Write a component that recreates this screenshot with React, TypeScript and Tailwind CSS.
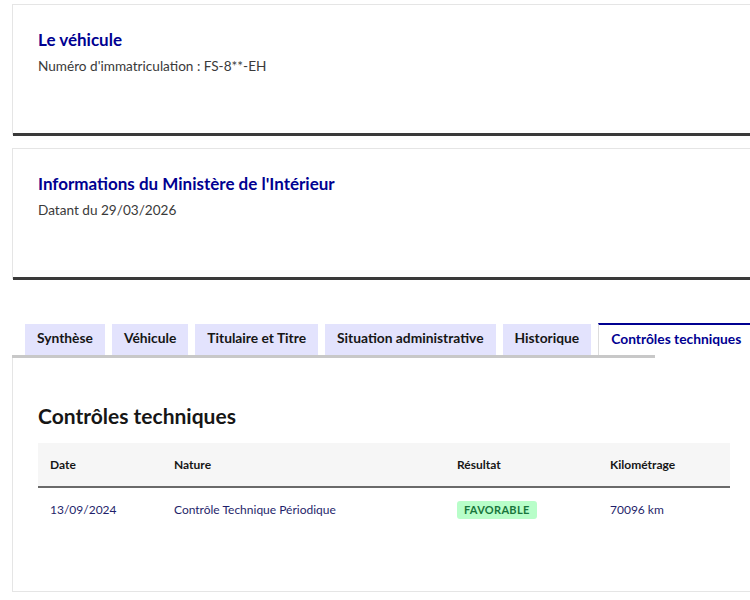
import React from 'react';

const tabs = ['Synthèse', 'Véhicule', 'Titulaire et Titre', 'Situation administrative', 'Historique'];

const InfoCard: React.FC<{ title: string; subtitle: string; className?: string }> = ({ title, subtitle, className = '' }) => (
  <div className={`w-[760px] h-[131px] border border-[#e5e5e5] border-b-0 bg-white ${className}`}>
    <div className="h-[128px] px-[25px] pt-[24px]">
      <h2 className="text-[17px] leading-[22px] font-bold text-[#000091]">{title}</h2>
      <p className="mt-[6px] text-[13.6px] leading-[18px] text-[#3a3a3a]">{subtitle}</p>
    </div>
    <div className="h-[3px] bg-[#3a3a3a]" />
  </div>
);

export default function App() {
  return (
    <div className="w-[750px] h-[600px] overflow-hidden bg-white" style={{ fontFamily: 'Lato, "Noto Sans", sans-serif' }}>
      <div className="pl-[12px] pt-[4px]">
        <InfoCard title="Le véhicule" subtitle="Numéro d'immatriculation : FS-8**-EH" />
        <InfoCard title="Informations du Ministère de l'Intérieur" subtitle="Datant du 29/03/2026" className="mt-[13px]" />

        {/* tabs */}
        <div className="mt-[44px] w-[760px]">
          <div className="flex items-end gap-[7px] pl-[13px] h-[32px]">
            {tabs.map((t) => (
              <div key={t} className="h-[31px] px-[12px] pb-[2px] flex items-center bg-[#e3e3fd] text-[13.8px] font-bold text-[#161616]">
                {t}
              </div>
            ))}
            <div className="h-[32px] w-[160px] px-[12px] pb-[2px] flex items-center bg-white border-t-2 border-l border-t-[#000091] border-l-[#dddddd] text-[13.8px] font-bold text-[#000091]">
              Contrôles techniques
            </div>
          </div>
          <div className="h-[3px] w-[643px] bg-[#c8c8c8]" />
        </div>

        {/* panel */}
        <div className="w-[760px] h-[234px] border-l border-b border-[#e5e5e5] pl-[25px] pt-[46px]">
          <h3 className="text-[21px] leading-[24px] font-bold text-[#161616]">Contrôles techniques</h3>
          <table className="mt-[15px] w-[692px] text-[12px] border-collapse">
            <thead>
              <tr className="bg-[#f6f6f6] h-[44px] border-b-2 border-[#6a6a6a]">
                <th className="text-left font-bold text-[#161616] pl-[12px] w-[136px]">Date</th>
                <th className="text-left font-bold text-[#161616] w-[283px]">Nature</th>
                <th className="text-left font-bold text-[#161616] w-[153px]">Résultat</th>
                <th className="text-left font-bold text-[#161616]">Kilométrage</th>
              </tr>
            </thead>
            <tbody>
              <tr className="h-[44px]">
                <td className="pl-[12px] text-[#1f1f6b]">13/09/2024</td>
                <td className="text-[#1f1f6b]">Contrôle Technique Périodique</td>
                <td>
                  <span className="inline-block px-[7px] py-[2px] rounded-[3px] bg-[#b8fec9] text-[#18753c] font-bold text-[11px] leading-[14px] tracking-[0.3px]">
                    FAVORABLE
                  </span>
                </td>
                <td className="text-[#1f1f6b]">70096 km</td>
              </tr>
            </tbody>
          </table>
        </div>
      </div>
    </div>
  );
}
